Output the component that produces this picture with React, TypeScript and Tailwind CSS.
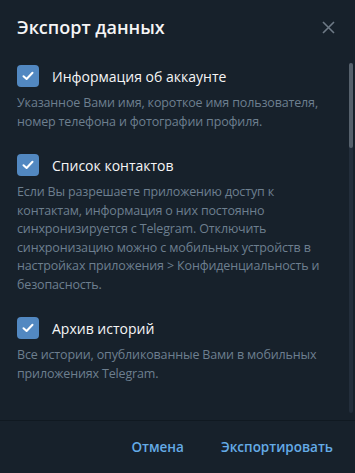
import React from "react";

type Item = { title: string; text: string };

const items: Item[] = [
    {
        title: "Информация об аккаунте",
        text: "Указанное Вами имя, короткое имя пользователя, номер телефона и фотографии профиля.",
    },
    {
        title: "Список контактов",
        text: "Если Вы разрешаете приложению доступ к контактам, информация о них постоянно синхронизируется с Telegram. Отключить синхронизацию можно с мобильных устройств в настройках приложения > Конфиденциальность и безопасность.",
    },
    {
        title: "Архив историй",
        text: "Все истории, опубликованные Вами в мобильных приложениях Telegram.",
    },
];

function Checkbox()
{
    return (
        <div className="w-[22px] h-[22px] shrink-0 rounded-[4px] bg-[#5288c1] flex items-center justify-center">
            <svg width="12" height="10" viewBox="0 0 12 10" fill="none">
                <path d="M1.5 5.2 L4.6 8 L10.5 1.8" stroke="white" strokeWidth="2" strokeLinecap="round" strokeLinejoin="round"/>
            </svg>
        </div>
    );
}

function Section({item}: {item: Item})
{
    return (
        <div className="flex flex-col">
            <div className="flex flex-row items-center gap-[13px]">
                <Checkbox/>
                <span className="text-[14px] text-[#f5f5f5]">{item.title}</span>
            </div>
            <p className="mt-[7px] text-[12.5px] tracking-[-0.15px] leading-[18.5px] text-[#6d7f8f]">{item.text}</p>
        </div>
    );
}

export default function App()
{
    return (
        <div className="w-[355px] h-[473px] bg-[#17212b] flex flex-col overflow-hidden"
             style={{fontFamily: "'Open Sans', 'Noto Sans', sans-serif"}}>
            <div className="h-[55px] shrink-0 flex flex-row items-center justify-between pl-[17px] pr-[20px]">
                <h1 className="text-[18px] font-semibold text-[#f5f5f5]">Экспорт данных</h1>
                <svg width="13" height="13" viewBox="0 0 13 13">
                    <path d="M1 1 L12 12 M12 1 L1 12" stroke="#6e7a86" strokeWidth="1.6"/>
                </svg>
            </div>
            <div className="relative flex-1 min-h-0">
                <div className="flex flex-col gap-[23px] pl-[17px] pr-[17px] pt-[10px]">
                    {items.map((item) => <Section key={item.title} item={item}/>)}
                </div>
                <div className="absolute right-[2px] top-[8px] bottom-[7px] w-[4px] rounded-full bg-[#232e3b]">
                    <div className="h-[85px] w-full rounded-full bg-[#56616c]"/>
                </div>
            </div>
            <div className="h-[53px] shrink-0 border-t border-[#101921] flex flex-row items-center justify-end gap-[37px] pr-[22px]">
                <button className="text-[13.5px] font-semibold text-[#64abe6]">Отмена</button>
                <button className="text-[13.5px] font-semibold text-[#64abe6]">Экспортировать</button>
            </div>
        </div>
    );
}
